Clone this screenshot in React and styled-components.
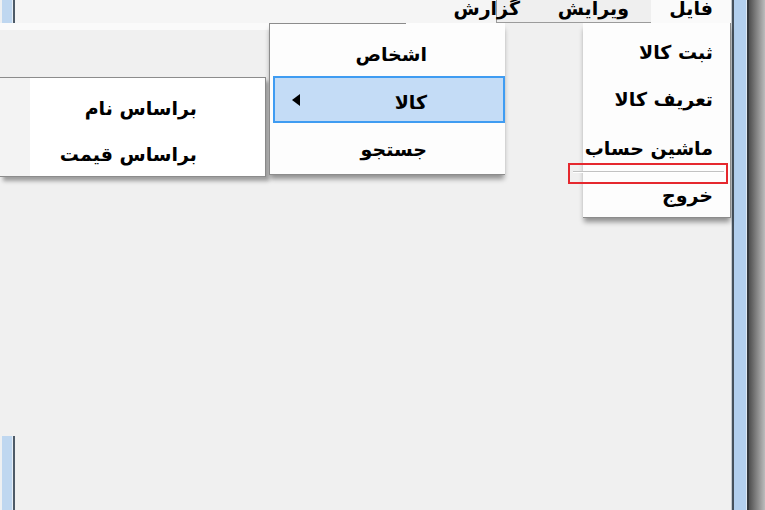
import React from 'react';
import styled, { createGlobalStyle } from 'styled-components';

const GlobalStyle = createGlobalStyle`
  html, body {
    margin: 0;
    padding: 0;
    background: #f0f0f0;
  }
  body {
    font-family: "DejaVu Sans", "Noto Sans", sans-serif;
    overflow: hidden;
  }
`;

const Window = styled.div`
  width: 765px;
  height: 510px;
  display: grid;
  grid-template-columns: 731px 34px;
  overflow: hidden;
`;

const Main = styled.div`
  position: relative;
  display: flex;
  flex-direction: column;
  min-width: 0;
`;

// left edge of the window behind (blue glass + dark line)
const FrameEdge = styled.div`
  width: 15px;
  height: ${(p) => p.$height || 'auto'};
  flex-shrink: 0;
  background: linear-gradient(
    to right,
    #eef0f2 0 2px,
    #bfd7f0 2px 12px,
    #e6eef6 12px 13px,
    #4d5a67 13px 15px
  );
`;

const RightFrame = styled.div`
  background: linear-gradient(
    to right,
    #c4c9ce 0 1px,
    #45515d 1px 3px,
    #b2cfee 3px 15px,
    #dbe7f3 15px 16px,
    #33373c 16px 18px,
    #4f4f4f 18px,
    #bcbcbc 34px
  );
`;

const MenuBar = styled.div`
  height: 23px;
  display: flex;
  background: #f5f5f5;
  flex-shrink: 0;
`;

const MenuTabs = styled.div`
  flex: 1;
  display: flex;
  direction: rtl;
`;

const Tab = styled.div`
  width: ${(p) => p.$width || 'auto'};
  flex: ${(p) => (p.$grow ? 1 : 'none')};
  box-sizing: border-box;
  padding-right: ${(p) => p.$pad}px;
  background: ${(p) => p.$bg || 'transparent'};
  border-left: ${(p) => (p.$sunken ? '1px solid #9b9b9b' : 'none')};
  border-bottom: ${(p) => (p.$sunken ? '1px solid #9b9b9b' : 'none')};
`;

const TabLabel = styled.span`
  display: inline-block;
  margin-top: -5px;
  margin-right: ${(p) => p.$shift || 0}px;
  font-size: 19px;
  line-height: 19px;
  font-weight: bold;
  color: #000;
  white-space: nowrap;
`;

const Client = styled.div`
  flex: 1;
  background: #f0f0f0;
  display: flex;
  flex-direction: column;
  justify-content: space-between;
`;

const Glow = styled.div`
  width: 497px;
  height: 7px;
  background: #fafafa;
`;

// popup menus lie over the form
const Menu = styled.div`
  position: absolute;
  left: ${(p) => p.$left}px;
  top: ${(p) => p.$top}px;
  width: ${(p) => p.$width}px;
  box-sizing: border-box;
  direction: rtl;
  background: ${(p) => p.$gutter
    ? 'linear-gradient(to right, #f3f3f3 0 30px, #ffffff 30px)'
    : '#fdfdfd'};
  border: 1px solid #8c8c8c;
  border-width: ${(p) => p.$borders};
  padding: ${(p) => p.$padding};
  box-shadow: ${(p) => p.$shadow};
  z-index: ${(p) => p.$z};

  &::before {
    content: '';
    display: ${(p) => (p.$topLine ? 'block' : 'none')};
    position: absolute;
    top: 0;
    left: -1px;
    width: ${(p) => p.$topLine}px;
    height: 1px;
    background: #8c8c8c;
  }
`;

const Item = styled.div`
  height: ${(p) => p.$h}px;
  box-sizing: border-box;
  display: flex;
  align-items: center;
  justify-content: space-between;
  padding-top: ${(p) => (p.$dy ?? 4)}px;
  padding-right: ${(p) => p.$inset}px;
  padding-left: 17px;
  margin-left: ${(p) => (p.$active ? 3 : 0)}px;
  background: ${(p) => (p.$active ? '#c4dcf6' : 'transparent')};
  border: ${(p) => (p.$active ? '2px solid #3f9cf2' : 'none')};
  font-size: 19px;
  line-height: 20px;
  font-weight: bold;
  color: #000;
  white-space: nowrap;
`;

const Arrow = styled.svg`
  width: 8px;
  height: 12px;
  flex-shrink: 0;
  margin-top: -4px;
`;

const Separator = styled.div`
  height: 1px;
  margin: 1px 6px 0 -10px;
  background: #c2c2c2;
  border-bottom: 1px solid #ffffff;
`;

const Annotation = styled.div`
  position: absolute;
  left: 568px;
  top: 163px;
  width: 160px;
  height: 21px;
  box-sizing: border-box;
  border: 2px solid #e5282e;
  z-index: 5;
`;

const fileItems = ['ثبت کالا', 'تعریف کالا', 'ماشین حساب'];
const byItems = ['براساس نام', 'براساس قیمت'];

const App = () => {
  return (
    <>
      <GlobalStyle />
      <Window>
        <Main>
          <MenuBar>
            <FrameEdge />
            <MenuTabs>
              <Tab $width='80px' $pad={18} $bg='#fafafa'>
                <TabLabel>فایل</TabLabel>
              </Tab>
              <Tab $width='155px' $pad={22} $bg='#efefef' $sunken>
                <TabLabel>ویرایش</TabLabel>
              </Tab>
              <Tab $grow $pad={0}>
                <TabLabel $shift={-24}>گزارش</TabLabel>
              </Tab>
            </MenuTabs>
          </MenuBar>
          <Client>
            <Glow />
            <FrameEdge $height='74px' />
          </Client>

          {/* منوی سطح سوم */}
          <Menu
            $left={0}
            $top={77}
            $width={266}
            $borders='1px 1px 1px 0'
            $padding='5px 0 1px'
            $shadow='3px 4px 4px rgba(0,0,0,0.35)'
            $gutter
            $z={1}
          >
            {byItems.map((t) => (
              <Item key={t} $h={46} $inset={68}>
                {t}
              </Item>
            ))}
          </Menu>

          {/* منوی سطح دوم */}
          <Menu
            $left={269}
            $top={23}
            $width={236}
            $borders='0 0 1px 1px'
            $padding='5px 0 3px'
            $shadow='0 5px 5px -1px rgba(0,0,0,0.4)'
            $topLine={137}
            $z={2}
          >
            <Item $h={48} $inset={78}>
              اشخاص
            </Item>
            <Item $h={47} $inset={76} $active>
              کالا
              <Arrow viewBox='0 0 8 12'>
                <polygon points='8,0 8,12 0,6' fill='#000' />
              </Arrow>
            </Item>
            <Item $h={48} $inset={78}>
              جستجو
            </Item>
          </Menu>

          {/* منوی فایل */}
          <Menu
            $left={583}
            $top={23}
            $width={148}
            $borders='0 1px 1px 0'
            $padding='3px 0 0'
            $shadow='0 5px 5px -1px rgba(0,0,0,0.4)'
            $z={3}
          >
            {fileItems.map((t, i) => (
              <Item key={t} $h={48} $inset={17} $dy={i === 1 ? 1 : 4}>
                {t}
              </Item>
            ))}
            <Separator />
            <Item $h={44} $inset={17} $dy={0}>
              خروج
            </Item>
          </Menu>

          <Annotation />
        </Main>
        <RightFrame />
      </Window>
    </>
  );
};

export default App;
